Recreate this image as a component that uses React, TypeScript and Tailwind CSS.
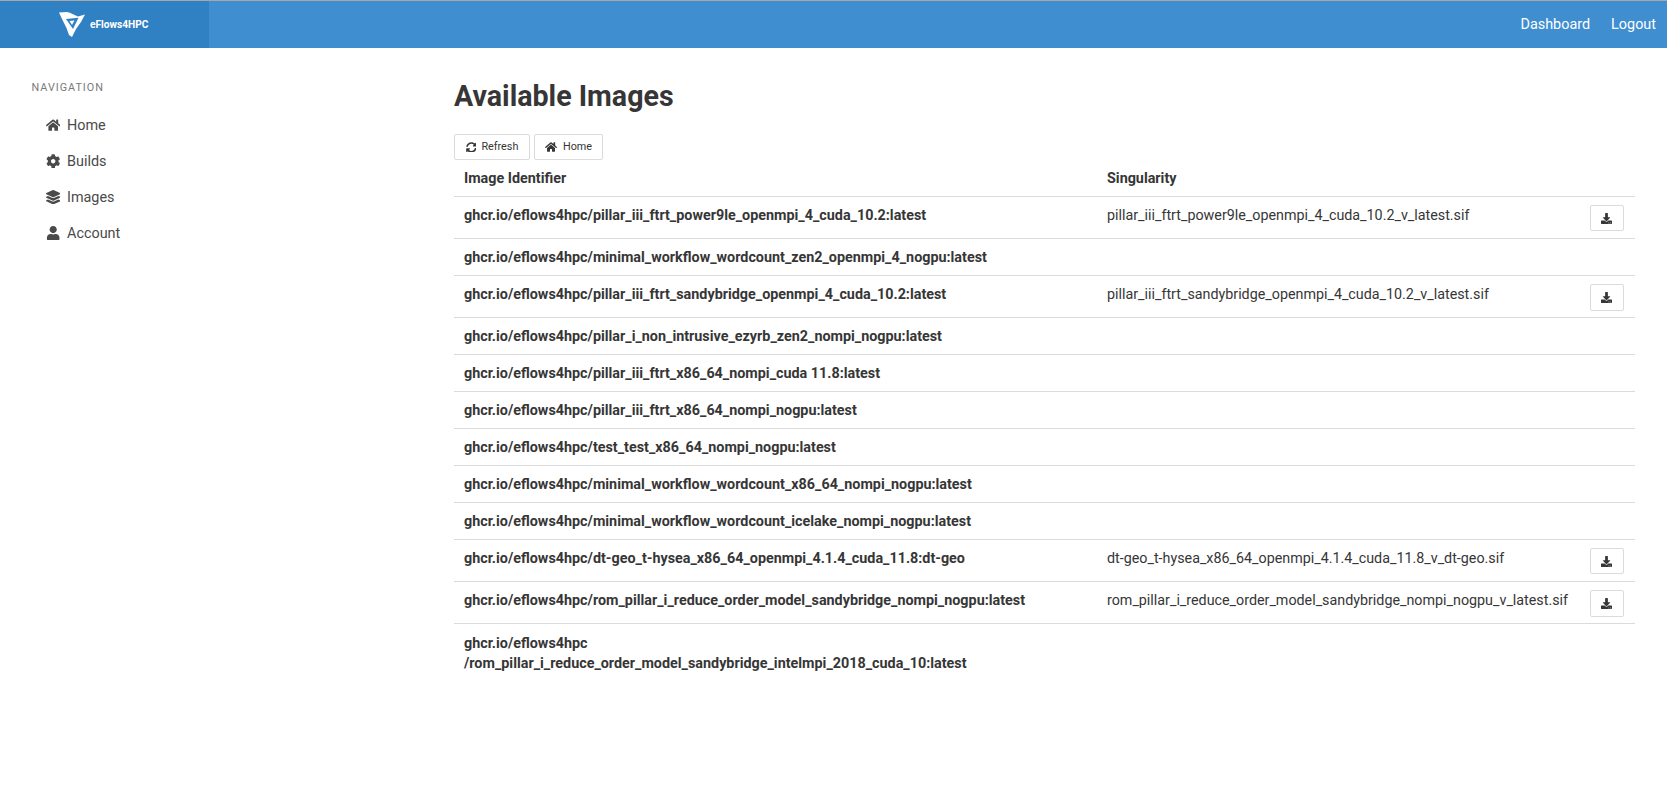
import React from 'react';
import { FaHome, FaCog, FaLayerGroup, FaUser, FaSyncAlt, FaDownload } from 'react-icons/fa';

const navItems = [
  { title: 'Home', icon: FaHome },
  { title: 'Builds', icon: FaCog },
  { title: 'Images', icon: FaLayerGroup },
  { title: 'Account', icon: FaUser },
];

const images: { id: React.ReactNode; sif?: string; wrap?: boolean }[] = [
  { id: 'ghcr.io/eflows4hpc/pillar_iii_ftrt_power9le_openmpi_4_cuda_10.2:latest', sif: 'pillar_iii_ftrt_power9le_openmpi_4_cuda_10.2_v_latest.sif' },
  { id: 'ghcr.io/eflows4hpc/minimal_workflow_wordcount_zen2_openmpi_4_nogpu:latest' },
  { id: 'ghcr.io/eflows4hpc/pillar_iii_ftrt_sandybridge_openmpi_4_cuda_10.2:latest', sif: 'pillar_iii_ftrt_sandybridge_openmpi_4_cuda_10.2_v_latest.sif' },
  { id: 'ghcr.io/eflows4hpc/pillar_i_non_intrusive_ezyrb_zen2_nompi_nogpu:latest' },
  { id: 'ghcr.io/eflows4hpc/pillar_iii_ftrt_x86_64_nompi_cuda 11.8:latest' },
  { id: 'ghcr.io/eflows4hpc/pillar_iii_ftrt_x86_64_nompi_nogpu:latest' },
  { id: 'ghcr.io/eflows4hpc/test_test_x86_64_nompi_nogpu:latest' },
  { id: 'ghcr.io/eflows4hpc/minimal_workflow_wordcount_x86_64_nompi_nogpu:latest' },
  { id: 'ghcr.io/eflows4hpc/minimal_workflow_wordcount_icelake_nompi_nogpu:latest' },
  { id: 'ghcr.io/eflows4hpc/dt-geo_t-hysea_x86_64_openmpi_4.1.4_cuda_11.8:dt-geo', sif: 'dt-geo_t-hysea_x86_64_openmpi_4.1.4_cuda_11.8_v_dt-geo.sif' },
  { id: 'ghcr.io/eflows4hpc/rom_pillar_i_reduce_order_model_sandybridge_nompi_nogpu:latest', sif: 'rom_pillar_i_reduce_order_model_sandybridge_nompi_nogpu_v_latest.sif' },
  { id: <>ghcr.io/eflows4hpc<br />/rom_pillar_i_reduce_order_model_sandybridge_intelmpi_2018_cuda_10:latest</>, wrap: true },
];

function Logo() {
  return (
    <svg viewBox="0 0 26 25" className="w-[26px] h-[25px]">
      <path fill="white" d="M0 0.5 L8 0 C12 0.5 15 3 19 4.5 L26 2.5 L22 10 L17 17 L13 25 L10 23 L7.5 16 L3 7 Z" />
      <path fill="#3081c4" d="M7 7 L19.5 5.8 L14 17 L10.5 12 Z" />
      <path fill="white" d="M10.5 9 L15.5 8.5 L13 13 Z" />
    </svg>
  );
}

export default function App() {
  return (
    <div className="min-h-screen bg-white text-[#363636] font-['Roboto',sans-serif] text-[14.4px]">
      <header className="h-[48px] flex bg-[#3e8ed0] border-t border-[#a8a8a8] text-white">
        <div className="w-[209px] bg-[#3081c4] flex items-center pl-[59px] gap-[5px]">
          <Logo />
          <span className="text-[10.2px] font-bold">eFlows4HPC</span>
        </div>
        <nav className="ml-auto flex items-center gap-[21px] pr-[11px] text-[14.4px]">
          <span>Dashboard</span>
          <span>Logout</span>
        </nav>
      </header>

      <div className="flex">
        <aside className="w-[454px] shrink-0 pl-[31.5px] pt-[32px]">
          <p className="text-[10.8px] tracking-[1px] text-[#7a7a7a] leading-[16px] uppercase">Navigation</p>
          <ul className="mt-[12px] pl-[12.5px]">
            {navItems.map(item => (
              <li key={item.title} className="h-[36px] flex items-center text-[#4a4a4a]">
                <span className="w-[18px] flex justify-center mb-[2px]"><item.icon className="h-[14.4px] w-auto" /></span>
                <span className="pl-[5px]">{item.title}</span>
              </li>
            ))}
          </ul>
        </aside>

        <main className="flex-1 pr-[32px] pt-[28px]">
          <h1 className="text-[28.6px] leading-[40px] font-bold text-[#363636]">Available Images</h1>
          <div className="mt-[18px] flex gap-[4px]">
            <button className="h-[26px] w-[76px] border border-[#dbdbdb] rounded-[2px] flex items-center justify-center gap-[5px] text-[10.8px] text-[#363636]">
              <FaSyncAlt className="w-[10.8px] h-[10.8px]" />Refresh
            </button>
            <button className="h-[26px] w-[69px] border border-[#dbdbdb] rounded-[2px] flex items-center justify-center gap-[6px] text-[10.8px] text-[#363636]">
              <FaHome className="w-[12px] h-[12px]" />Home
            </button>
          </div>
          <table className="w-full table-fixed text-[14.35px] leading-[19.9px]">
            <colgroup>
              <col className="w-[643px]" />
              <col />
              <col className="w-[55.5px]" />
            </colgroup>
            <thead>
              <tr className="border-b border-[#dbdbdb]">
                <th className="px-[10px] pt-[9px] pb-[7px] text-left font-bold">Image Identifier</th>
                <th className="px-[10px] pt-[9px] pb-[7px] text-left font-bold">Singularity</th>
                <th />
              </tr>
            </thead>
            <tbody>
              {images.map((img, i) => (
                <tr key={i} className="border-b border-[#dbdbdb] last:border-b-0 align-top">
                  <td className={img.wrap ? 'px-[10px] pt-[10px] pb-[6px] font-bold' : 'px-[10px] pt-[9px] pb-[7px] font-bold'}>{img.id}</td>
                  <td className="px-[10px] pt-[9px] pb-[7px] text-[14.3px] text-[#363636] whitespace-nowrap">{img.sif}</td>
                  <td className="px-[10px] pt-[8px] pb-[6.75px]">
                    {img.sif && (
                      <button className="w-[34px] h-[26.5px] border border-[#dbdbdb] rounded-[2px] flex items-center justify-center">
                        <FaDownload className="w-[11px] h-[11px] text-[#363636]" />
                      </button>
                    )}
                  </td>
                </tr>
              ))}
            </tbody>
          </table>
        </main>
      </div>
    </div>
  );
}
